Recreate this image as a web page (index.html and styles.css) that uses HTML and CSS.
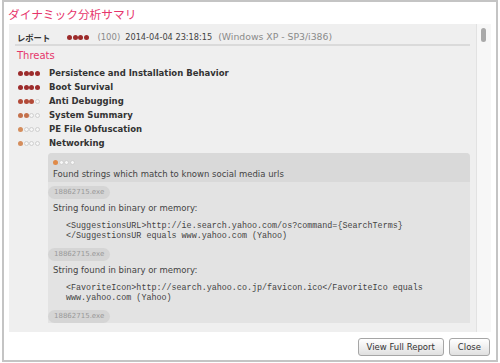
FILE: index.html
```html
<!DOCTYPE html>
<html lang="ja">
<head>
    <meta charset="UTF-8">
    <title>ダイナミック分析サマリ</title>
    <link rel="stylesheet" href="styles.css">
</head>
<body>

<div class="dialog">
    <h1 class="title">ダイナミック分析サマリ</h1>

    <div class="scroll-area">
        <div class="scroll-content">
            <div class="report-row">
                <span class="report-label">レポート</span>
                <span class="dots r4"><i class="on"></i><i class="on"></i><i class="on"></i><i class="on"></i></span>
                <span class="muted score">(100)</span>
                <span class="date">2014-04-04 23:18:15</span>
                <span class="muted os">(Windows XP - SP3/i386)</span>
            </div>

            <h2 class="section-title">Threats</h2>
            <ul class="threats">
                <li><span class="dots r4"><i class="on"></i><i class="on"></i><i class="on"></i><i class="on"></i></span>Persistence and Installation Behavior</li>
                <li><span class="dots r4"><i class="on"></i><i class="on"></i><i class="on"></i><i class="on"></i></span>Boot Survival</li>
                <li><span class="dots r3"><i class="on"></i><i class="on"></i><i class="on"></i><i></i></span>Anti Debugging</li>
                <li><span class="dots r2"><i class="on"></i><i class="on"></i><i></i><i></i></span>System Summary</li>
                <li><span class="dots r1"><i class="on"></i><i></i><i></i><i></i></span>PE File Obfuscation</li>
                <li><span class="dots r1"><i class="on"></i><i></i><i></i><i></i></span>Networking</li>
            </ul>

            <div class="detail">
                <div class="detail-head">
                    <div class="dots r0"><i class="on"></i><i></i><i></i><i></i></div>
                    <div class="detail-title">Found strings which match to known social media urls</div>
                </div>
                <div class="detail-body">
                    <span class="file-pill">18862715.exe</span>
                    <p class="finding">String found in binary or memory:</p>
<pre class="code">&lt;SuggestionsURL&gt;http://ie.search.yahoo.com/os?command={SearchTerms}
&lt;/SuggestionsUR equals www.yahoo.com (Yahoo)</pre>

                    <span class="file-pill">18862715.exe</span>
                    <p class="finding">String found in binary or memory:</p>
<pre class="code">&lt;FavoriteIcon&gt;http://search.yahoo.co.jp/favicon.ico&lt;/FavoriteIco equals
www.yahoo.com (Yahoo)</pre>

                    <span class="file-pill">18862715.exe</span>
                </div>
            </div>
        </div>
        <div class="scrollbar"><div class="thumb"></div></div>
    </div>

    <div class="footer">
        <button class="btn">View Full Report</button>
        <button class="btn">Close</button>
    </div>
</div>

</body>
</html>
```

FILE: styles.css
```css
body {
    margin: 0;
    font-family: "DejaVu Sans", "Noto Sans CJK JP", sans-serif;
    background: #fff;
}
.dialog {
    margin-left: 2px;
    width: 496px;
    height: 362px;
    box-sizing: border-box;
    border: 2px solid #c4c4c4;
    padding: 0 5px;
    display: flex;
    flex-direction: column;
}
.title {
    margin: 0 0 0 -1px;
    height: 22px;
    line-height: 23px;
    font-size: 11.7px;
    font-weight: normal;
    color: #e6356b;
    font-family: "Noto Sans CJK JP", sans-serif;
}
.scroll-area {
    height: 308px;
    display: flex;
    background: #efefef;
}
.scroll-content {
    flex: 1;
    overflow: hidden;
    padding: 0 6px 0 6px;
}
.report-row {
    display: flex;
    align-items: center;
    padding: 8px 0 2px 2px;
    line-height: 10px;
    font-size: 8.5px;
    color: #444;
    border-bottom: 2px solid #dadada;
}
.report-label {
    width: 50px;
    font-family: "Noto Sans CJK JP", sans-serif;
    font-size: 8.3px;
    font-weight: bold;
    color: #333;
}
.muted {
    color: #8a8a8a;
}
.score {
    margin-left: 8px;
}
.date {
    margin-left: 5px;
    font-size: 8.2px;
}
.os {
    margin-left: 6px;
    font-size: 9.3px;
}
/* rating dots */
.dots {
    display: flex;
    align-items: center;
}
.dots i {
    display: block;
    width: 5px;
    height: 5px;
    margin-right: 0.6px;
    box-sizing: border-box;
    border-radius: 50%;
    border: 1px solid #cfcfcf;
    background: #f6f6f6;
}
.dots i.on {
    border: none;
}
.r4 i.on { background: #9c2b2b; }
.r3 i.on { background: #b24a38; }
.r2 i.on { background: #c4714c; }
.r1 i.on { background: #d48d5c; }
.r0 i.on { background: #e08a48; }
.section-title {
    margin: 0 0 0 2px;
    font-size: 10px;
    line-height: 20px;
    font-weight: normal;
    color: #e6356b;
}
.threats {
    list-style: none;
    margin: 0;
    padding: 0 0 0 3px;
}
.threats li {
    display: flex;
    align-items: center;
    height: 14px;
    font-size: 8.5px;
    font-weight: bold;
    color: #333;
}
.threats .dots {
    width: 31px;
}
.detail {
    margin: 3px 0 0 33px;
    background: #e3e3e3;
    border-radius: 4px 4px 0 0;
}
.detail-head {
    background: #d9d9d9;
    border-radius: 4px 4px 0 0;
    padding: 5px 0 2px 5px;
}
.detail-head .dots {
    height: 9px;
}
.detail-title {
    margin-top: 2px;
    font-size: 8.5px;
    line-height: 11px;
    color: #444;
}
.detail-body {
    padding-top: 4px;
}
.file-pill {
    display: block;
    width: fit-content;
    height: 13px;
    line-height: 13px;
    padding: 0 6px 0 6px;
    border-radius: 7px;
    background: #d5d5d5;
    color: #999;
    font-size: 7px;
}
.finding {
    margin: 4px 0 0 0;
    padding-left: 5px;
    font-size: 8.5px;
    line-height: 11px;
    color: #444;
}
.code {
    margin: 7px 0 7px 0;
    padding-left: 18px;
    font-family: "Liberation Mono", monospace;
    font-size: 8.4px;
    line-height: 10px;
    color: #444;
}
.scrollbar {
    width: 14px;
    background: #f7f7f7;
    border-left: 1px solid #e2e2e2;
}
.thumb {
    width: 5px;
    height: 14px;
    margin: 4px 0 0 4px;
    border-radius: 3px;
    background: #a9a9a9;
}
.footer {
    display: flex;
    justify-content: flex-end;
    gap: 5px;
    padding: 6px 1px 0 0;
}
.btn {
    height: 18px;
    padding: 0 8px;
    font-family: "DejaVu Sans", sans-serif;
    font-size: 8.5px;
    color: #333;
    border: 1px solid #a6a6a6;
    border-radius: 3px;
    background: linear-gradient(#ffffff, #e0e0e0);
}
```
